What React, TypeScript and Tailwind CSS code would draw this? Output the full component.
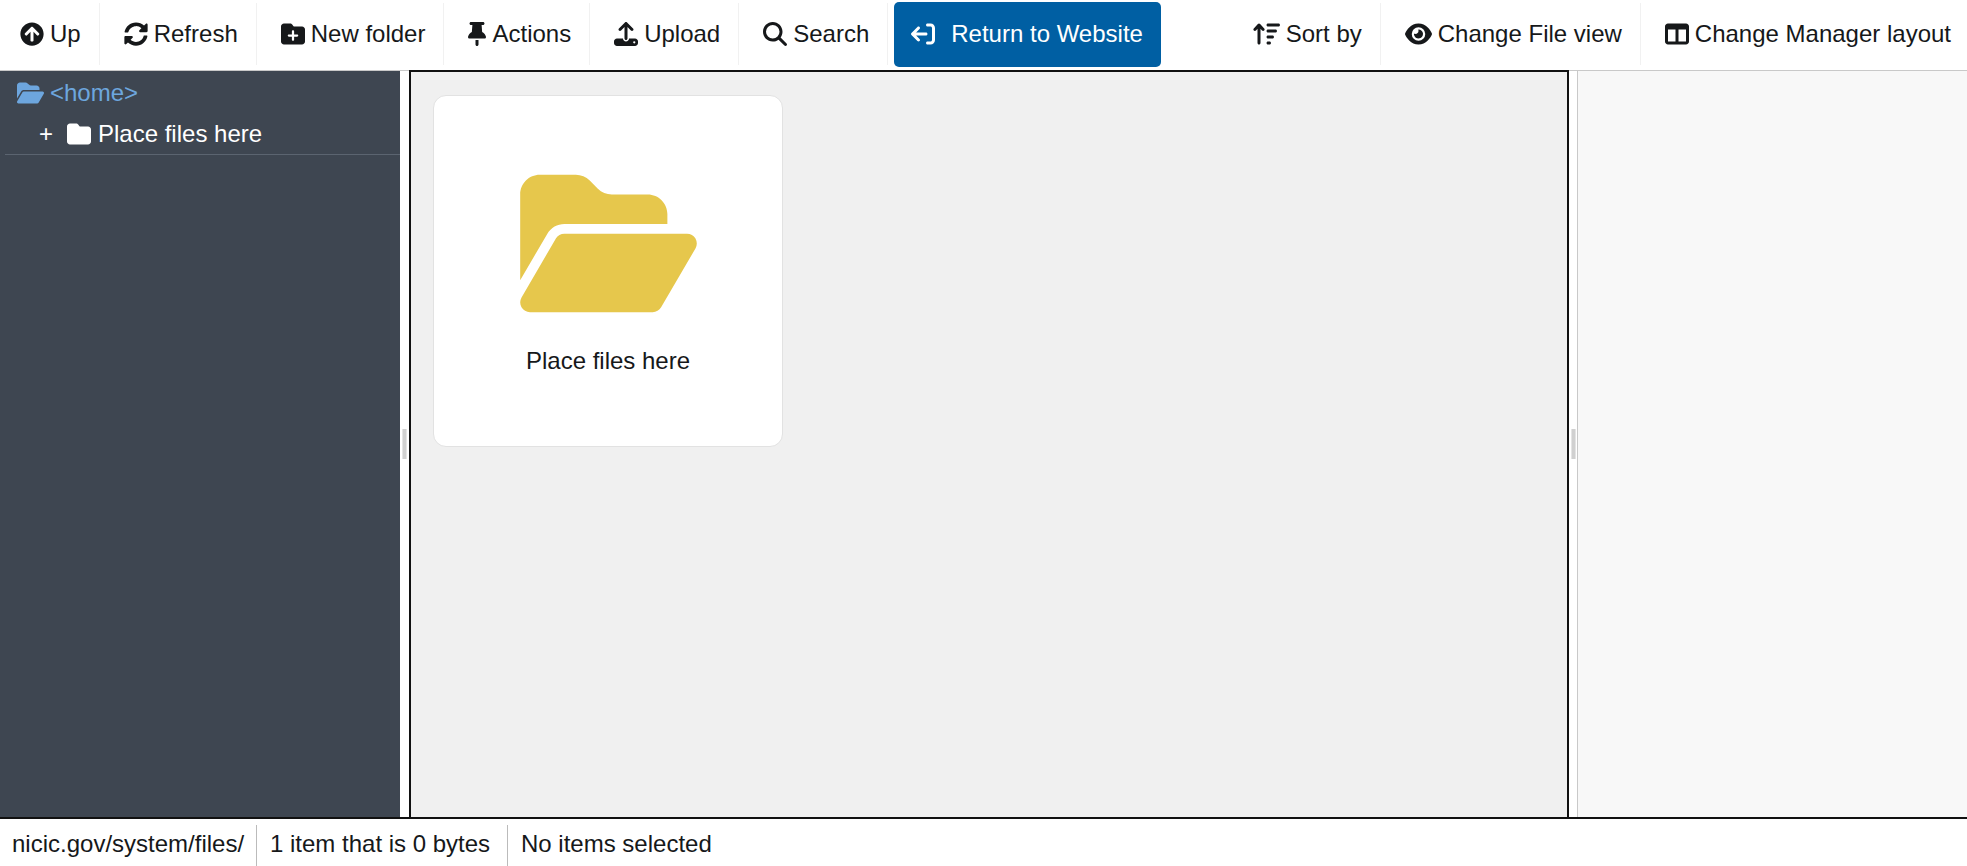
import React from 'react';
import { FaArrowCircleUp, FaSyncAlt } from 'react-icons/fa';
import {
  FaFolderPlus,
  FaThumbtack,
  FaUpload,
  FaMagnifyingGlass,
  FaArrowRightFromBracket,
  FaArrowUpWideShort,
  FaEye,
  FaTableColumns,
  FaFolderOpen,
  FaFolder,
} from 'react-icons/fa6';

const ToolButton: React.FC<{ icon: React.ReactNode; label: string; first?: boolean; last?: boolean }> = ({ icon, label, first, last }) => (
  <button
    className={`flex items-center h-[62px] mb-[2px] gap-[6px] ${first ? 'pl-5' : 'pl-6'} ${last ? 'pr-4' : 'pr-[18px] border-r border-[#f1f1f1]'}`}
  >
    {icon}
    <span>{label}</span>
  </button>
);

const Gutter: React.FC<{ narrow?: boolean }> = ({ narrow }) => (
  <div className={`${narrow ? 'w-[8px]' : 'w-[9px]'} flex items-center justify-center bg-white`}>
    <div className="w-[5px] h-[30px] bg-[#d0d0d0] border-x border-[#e4e4e4]" />
  </div>
);

export default function App() {
  return (
    <div className="h-screen flex flex-col overflow-hidden bg-white text-[24px] leading-none text-[#16181a] font-['Liberation_Sans',Arial,sans-serif]">
      <header className="h-[71px] shrink-0 flex items-center border-b border-[#c9c9c9]">
        <ToolButton first icon={<FaArrowCircleUp size={24} />} label="Up" />
        <ToolButton icon={<FaSyncAlt size={24} />} label="Refresh" />
        <ToolButton icon={<FaFolderPlus size={24} />} label="New folder" />
        <ToolButton icon={<FaThumbtack className="w-[18px] h-6" />} label="Actions" />
        <ToolButton icon={<FaUpload size={24} />} label="Upload" />
        <ToolButton icon={<FaMagnifyingGlass size={24} />} label="Search" />
        <button className="ml-[6px] h-[65px] mb-px pb-[2px] flex items-center gap-[16px] pl-[17px] pr-[18px] rounded-[5px] bg-[#005fa3] text-white">
          <FaArrowRightFromBracket size={24} className="-scale-x-100" />
          <span>Return to Website</span>
        </button>
        <div className="ml-auto flex items-center">
          <ToolButton icon={<FaArrowUpWideShort className="w-[27px] h-6" />} label="Sort by" />
          <ToolButton icon={<FaEye className="w-[27px] h-6" />} label="Change File view" />
          <ToolButton last icon={<FaTableColumns size={24} />} label="Change Manager layout" />
        </div>
      </header>

      <main className="flex-1 min-h-0 flex">
        <aside className="w-[400px] shrink-0 bg-[#3e4651] text-white pl-[5px]">
          <div className="h-[43px] flex items-center gap-[6px] pl-3 text-[#6da6de]">
            <FaFolderOpen className="w-[27px] h-6" />
            <span>&lt;home&gt;</span>
          </div>
          <div className="h-[41px] flex items-center border-b border-[#5b6470] pl-[34px]">
            <span className="w-7">+</span>
            <FaFolder size={24} />
            <span className="ml-[7px]">Place files here</span>
          </div>
        </aside>
        <Gutter />
        <section className="w-[1160px] shrink-0 border-2 border-b-0 border-[#111] bg-[#f0f0f0] pl-[22px] pt-[23px] -mt-px">
          <div className="w-[350px] h-[352px] flex flex-col items-center rounded-[13px] border border-[#e2e2e2] bg-white pt-[69px]">
            <FaFolderOpen className="w-[177px] h-[157px] text-[#e6c74c]" />
            <span className="mt-[27px]">Place files here</span>
          </div>
        </section>
        <Gutter narrow />
        <section className="flex-1 border-l border-[#c9c9c9] bg-[#f8f8f8]" />
      </main>

      <footer className="h-[49px] shrink-0 flex items-end border-t-2 border-[#111]">
        <div className="h-[41px] flex items-center pb-[4px] px-3 border-r border-[#bbb] w-[257px]">nicic.gov/system/files/</div>
        <div className="h-[41px] flex items-center pb-[4px] px-[13px] border-r border-[#bbb] w-[251px]">1 item that is 0 bytes</div>
        <div className="h-[41px] flex items-center pb-[4px] px-[13px]">No items selected</div>
      </footer>
    </div>
  );
}
